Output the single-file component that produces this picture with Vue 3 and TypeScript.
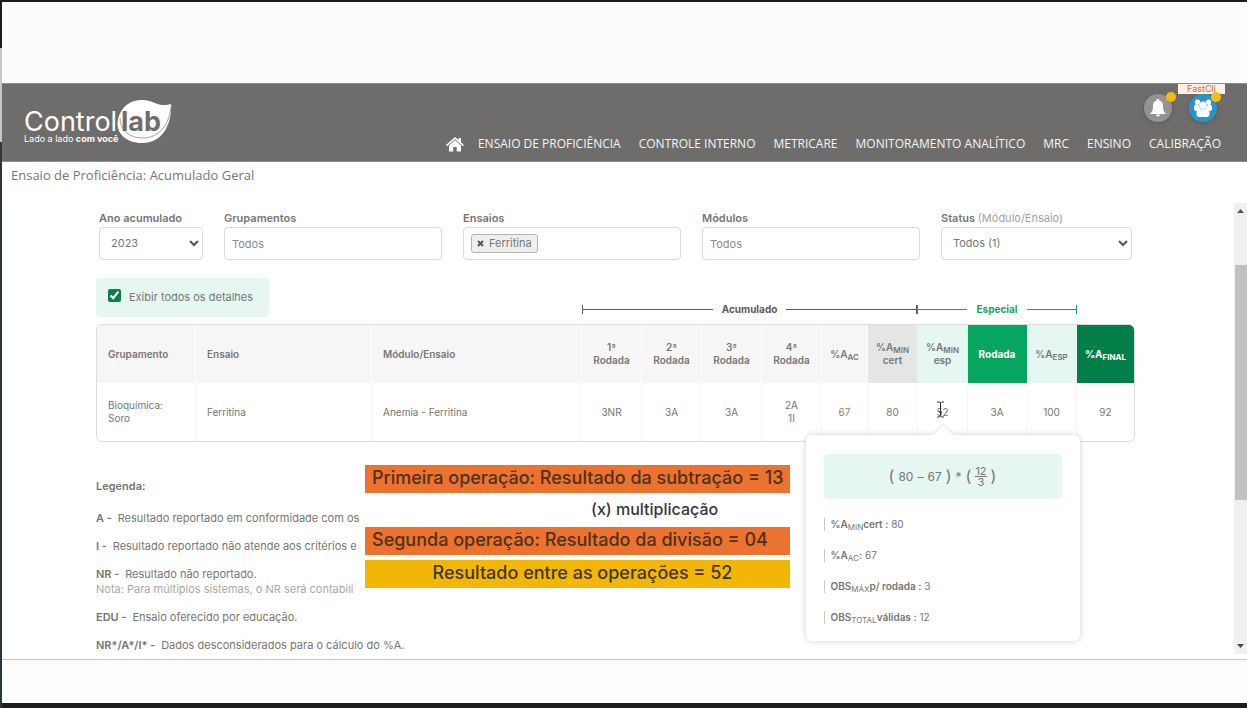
<script setup lang="ts">
import { ref } from 'vue'

const menu = ['ENSAIO DE PROFICIÊNCIA', 'CONTROLE INTERNO', 'METRICARE', 'MONITORAMENTO ANALÍTICO', 'MRC', 'ENSINO', 'CALIBRAÇÃO']
const year = ref('2023')
const status = ref('Todos (1)')
const groups = ref('')
const modules = ref('')
const details = ref(true)
const rounds = ['1ª', '2ª', '3ª', '4ª']
const variables = [
  { base: '%A', sub: 'MIN', rest: 'cert :', value: '80' },
  { base: '%A', sub: 'AC', rest: ':', value: '67' },
  { base: 'OBS', sub: 'MÁX', rest: 'p/ rodada :', value: '3' },
  { base: 'OBS', sub: 'TOTAL', rest: 'válidas :', value: '12' },
]
</script>

<template>
  <div class="frame">
    <header class="header">
      <a class="logo" href="#" aria-label="Controllab">
        <svg width="150" height="48" viewBox="0 0 150 48">
          <text class="logo-name" x="0" y="33">Control</text>
          <path d="M94 21C97 9 106 2 118 2c12 0 16 8 29 4 1 15-5 39-29 39-16 0-27-10-24-24z" fill="#fff" />
          <path d="M147 9c-2 17-11 31-28 31-14 0-23-8-23-20" fill="none" stroke="#a5a4a2" stroke-width="1" />
          <text class="logo-lab" x="97" y="33">lab</text>
          <text class="logo-tag" x="0" y="44">Lado a lado <tspan font-weight="700">com você</tspan></text>
        </svg>
      </a>
      <div class="header-right">
        <div class="actions">
          <button class="round bell" type="button" aria-label="Notificações">
            <svg width="18" height="20" viewBox="0 0 18 20"><path fill="#fff" d="M9 1c1 0 1.500.7 1.500 1.500C13 3.200 14 5.500 14 8c0 4.500 1 6 3 8H1c2-2 3-3.500 3-8 0-2.500 1-4.800 3.500-5.500C7.500 1.700 8 1 9 1zM7 16.500h4c0 1.300-.8 2-2 2s-2-.7-2-2z" /></svg>
            <span class="dot"></span>
          </button>
          <button class="round users" type="button" aria-label="Usuário">
            <svg width="20" height="20" viewBox="0 0 20 20" fill="#fff">
              <circle cx="4.500" cy="4" r="2.600" /><circle cx="15.500" cy="4" r="2.600" />
              <path d="M1 10c0-3 1-4 3.500-4L8 10l-2 3H3c-1.500 0-2-1-2-3zM19 10c0-3-1-4-3.500-4L12 10l2 3h3c1.500 0 2-1 2-3z" />
              <path d="M3.500 16c0-4 1.500-5 6.500-5s6.500 1 6.500 5c0 2-1 3-3 3h-7c-2 0-3-1-3-3z" />
              <circle cx="10" cy="7.500" r="4" stroke="#a9d3ea" stroke-width=".8" />
            </svg>
            <span class="dot"></span>
            <span class="user-tag">FastCli</span>
          </button>
        </div>
        <nav class="nav">
          <a href="#" aria-label="Início" class="home">
            <svg width="18" height="15" viewBox="0 0 18 15" fill="#fff"><path d="M9 0l3.500 3V1H15v4.200L18 8l-1 1.200L9 2.300 1 9.200 0 8z" /><path d="M9 3.300l6 5.200V14.500h-4.300V10H7.300v4.500H3V8.500z" /></svg>
          </a>
          <a v-for="item in menu" :key="item" href="#">{{ item }}</a>
        </nav>
      </div>
    </header>

    <h1 class="crumb">Ensaio de Proficiência: Acumulado Geral</h1>

    <div class="viewport">
      <main class="content">
        <form class="filters" @submit.prevent>
          <div class="field">
            <label for="year">Ano acumulado</label>
            <div class="select">
              <select id="year" v-model="year"><option>2023</option></select>
              <svg width="10" height="7" viewBox="0 0 10 7"><path d="M1 1l4 4 4-4" /></svg>
            </div>
          </div>
          <div class="field">
            <label for="groups">Grupamentos</label>
            <input id="groups" v-model="groups" class="control" type="text" placeholder="Todos" />
          </div>
          <div class="field">
            <label for="tests">Ensaios</label>
            <div class="control tags">
              <span class="chip"><button type="button" aria-label="Remover Ferritina"><svg width="7" height="7" viewBox="0 0 7 7"><path d="M1 1l5 5M6 1L1 6" /></svg></button>Ferritina</span>
              <input id="tests" type="text" />
            </div>
          </div>
          <div class="field">
            <label for="modules">Módulos</label>
            <input id="modules" v-model="modules" class="control" type="text" placeholder="Todos" />
          </div>
          <div class="field">
            <label for="status">Status <span>(Módulo/Ensaio)</span></label>
            <div class="select">
              <select id="status" v-model="status"><option>Todos (1)</option></select>
              <svg width="10" height="7" viewBox="0 0 10 7"><path d="M1 1l4 4 4-4" /></svg>
            </div>
          </div>
        </form>

        <div class="above">
          <div>
            <label class="toggle">
              <input v-model="details" type="checkbox" />
              <span>Exibir todos os detalhes</span>
            </label>
          </div>
          <div class="bracket"><i></i><b>Acumulado</b><i></i></div>
          <div class="bracket special"><i></i><b>Especial</b><i></i></div>
        </div>

        <table class="results">
          <colgroup>
            <col class="w-group" /><col class="w-test" /><col class="w-module" />
            <col v-for="r in rounds" :key="r" class="w-round" />
            <col class="w-ac" /><col class="w-min" /><col class="w-min" /><col class="w-special" /><col class="w-min" /><col class="w-final" />
          </colgroup>
          <thead>
            <tr>
              <th class="left">Grupamento</th>
              <th class="left">Ensaio</th>
              <th class="left">Módulo/Ensaio</th>
              <th v-for="r in rounds" :key="r">{{ r }}<br />Rodada</th>
              <th>%A<sub>AC</sub></th>
              <th class="grey">%A<sub>MIN</sub><br />cert</th>
              <th class="mint">%A<sub>MIN</sub><br />esp</th>
              <th class="green">Rodada</th>
              <th class="mint">%A<sub>ESP</sub></th>
              <th class="dark">%A<sub>FINAL</sub></th>
            </tr>
          </thead>
          <tbody>
            <tr>
              <td class="left">Bioquímica:<br />Soro</td>
              <td class="left">Ferritina</td>
              <td class="left">Anemia - Ferritina</td>
              <td>3NR</td>
              <td>3A</td>
              <td>3A</td>
              <td>2A<br />1I</td>
              <td class="warn">67</td>
              <td>80</td>
              <td class="anchor">
                52
                <svg class="cursor" width="9" height="17" viewBox="0 0 9 17"><path d="M1 1h2.500l1 1 1-1H8M4.500 2v13M1 16h2.500l1-1 1 1H8M3 11h3" /></svg>
                <div class="popup">
                  <div class="formula">
                    <span class="paren">(</span><span>80</span><span>–</span><span>67</span><span class="paren">)</span><span>*</span><span class="paren">(</span>
                    <span class="fraction"><span>12</span><span>3</span></span><span class="paren">)</span>
                  </div>
                  <p v-for="v in variables" :key="v.base + v.sub"><b>{{ v.base }}<sub>{{ v.sub }}</sub>{{ v.rest }}</b> {{ v.value }}</p>
                </div>
              </td>
              <td>3A</td>
              <td>100</td>
              <td>92</td>
            </tr>
          </tbody>
        </table>

        <section class="legend">
          <h2>Legenda:</h2>
          <p><b>A - </b> Resultado reportado em conformidade com os</p>
          <p><b>I - </b> Resultado reportado não atende aos critérios e</p>
          <p><b>NR - </b> Resultado não reportado.<br /><small>Nota: Para múltiplos sistemas, o NR será contabili</small></p>
          <p><b>EDU - </b> Ensaio oferecido por educação.</p>
          <p><b>NR*/A*/I* - </b> Dados desconsiderados para o cálculo do %A.</p>
        </section>

        <aside class="notes">
          <p class="orange">Primeira operação: Resultado da subtração = 13</p>
          <p class="plain">(x) multiplicação</p>
          <p class="orange">Segunda operação: Resultado da divisão = 04</p>
          <p class="yellow">Resultado entre as operações = 52</p>
        </aside>
      </main>

      <div class="scrollbar" aria-hidden="true">
        <svg width="7" height="4" viewBox="0 0 7 4"><path d="M0 4l3.500-4L7 4z" fill="#555" /></svg>
        <div class="track"><div class="thumb"></div></div>
        <svg width="7" height="4" viewBox="0 0 7 4"><path d="M0 0h7L3.500 4z" fill="#444" /></svg>
      </div>
    </div>
    <footer class="base"></footer>
  </div>
</template>

<style>
body {
  margin: 0;
  background: #fff;
}
</style>

<style scoped>
* {
  box-sizing: border-box;
}

.frame {
  position: relative;
  display: flex;
  flex-direction: column;
  min-height: 100vh;
  padding-left: 2px;
  padding-top: 83px;
  overflow: hidden;
  font-family: Inter, "Open Sans", sans-serif;
  font-size: 11px;
  line-height: 15px;
  color: #777674;
  background:
    linear-gradient(#1d1c20, #1d1c20) 0 0 / 100% 2px no-repeat,
    linear-gradient(#1d1c20 48px, #c6c7c6 48px, #c6c7c6 142px, #2d363b 142px) 0 0 / 2px 100% no-repeat,
    linear-gradient(#fbfdfc, #fbfdfc) 0 0 / 100% 83px no-repeat,
    #fff;
}

h1,
h2,
p {
  margin: 0;
  font-size: inherit;
}

a {
  color: inherit;
  text-decoration: none;
}

.header {
  display: flex;
  justify-content: space-between;
  height: 79px;
  padding: 0 26px 0 22px;
  background: #6e6d6b;
  border-top: 1px solid #8f8e8c;
  border-bottom: 1px solid #8f8e8c;
}

.logo {
  margin-top: 14px;
}

.logo-name {
  font-size: 27px;
  fill: #fff;
}

.logo-lab {
  font-size: 27px;
  font-weight: 700;
  fill: #6e6d6b;
}

.logo-tag {
  font-size: 9px;
  fill: #fff;
}

.header-right {
  display: flex;
  flex-direction: column;
  align-items: flex-end;
}

.actions {
  display: flex;
  gap: 17px;
  padding: 10px 4px 0 0;
}

.round {
  position: relative;
  display: grid;
  place-items: center;
  width: 28px;
  height: 28px;
  padding: 0;
  border: 0;
  border-radius: 50%;
  box-shadow: 0 1px 4px #5a5958;
}

.bell {
  background: #949391;
}

.users {
  background: #2b93cb;
}

.dot {
  position: absolute;
  top: -2px;
  right: -4px;
  z-index: 1;
  width: 10px;
  height: 10px;
  border-radius: 50%;
  background: #f6bb16;
}

.user-tag {
  position: absolute;
  top: -10px;
  right: -8px;
  width: 47px;
  font-family: Inter, sans-serif;
  font-size: 9px;
  line-height: 10px;
  color: #cf6a48;
  background: #fdf1e1;
}

.nav {
  display: flex;
  align-items: center;
  gap: 18px;
  margin-top: 14px;
  font-family: "Open Sans", sans-serif;
  font-size: 12px;
  line-height: 16px;
  color: #f4f6f5;
}

.home {
  display: flex;
  margin-right: -4px;
}

.crumb {
  height: 41px;
  padding: 5px 9px;
  font-family: "Open Sans", sans-serif;
  font-size: 13px;
  line-height: 16px;
  font-weight: 400;
}

.viewport {
  display: flex;
  height: 452px;
  overflow: hidden;
}

.content {
  position: relative;
  flex: 1;
  min-width: 0;
  padding: 8px 99px 0 94px;
}

.filters {
  display: grid;
  grid-template-columns:
    minmax(0, 104fr) minmax(0, 218fr) minmax(0, 218fr)
    minmax(0, 218fr) minmax(0, 191fr);
  gap: 21px;
  padding: 0 3px;
}

.field label {
  display: block;
  height: 16px;
  font-weight: 600;
  white-space: nowrap;
}

.field label span {
  font-weight: 400;
  color: #a3a2a1;
}

.control,
.select select {
  display: block;
  width: 100%;
  height: 33px;
  border: 1px solid #d9d9d9;
  border-radius: 4px;
  background: #fff;
  color: #777674;
  font: inherit;
}

.control {
  padding: 0 7px;
}

.control::placeholder {
  color: #8b8a88;
  opacity: 1;
}

.tags {
  display: flex;
  align-items: center;
  gap: 4px;
}

.tags input {
  flex: 1;
  min-width: 0;
  border: 0;
  outline: 0;
}

.chip {
  display: flex;
  align-items: center;
  gap: 5px;
  height: 19px;
  padding: 0 5px;
  border: 1px solid #b5b5b5;
  border-radius: 3px;
  background: #efefef;
}

.chip button {
  display: flex;
  padding: 0;
  border: 0;
  background: none;
}

.chip path,
.select path {
  fill: none;
  stroke: #555;
  stroke-width: 2;
}

.select {
  display: grid;
  align-items: center;
}

.select select,
.select svg {
  grid-area: 1 / 1;
}

.select select {
  padding: 0 11px;
  appearance: none;
}

.select svg {
  justify-self: end;
  margin-right: 4px;
  pointer-events: none;
}

.above {
  display: grid;
  grid-template-columns: 486fr 335fr 160fr 58fr;
  align-items: end;
  margin: 18px 0 7px;
}

.toggle {
  display: inline-flex;
  align-items: center;
  gap: 8px;
  height: 39px;
  padding: 0 16px 0 12px;
  border-radius: 4px;
  background: #e5f7f0;
  vertical-align: top;
}

.toggle input {
  width: 13px;
  height: 13px;
  margin: 0 0 4px;
  accent-color: #0b7f4b;
}

.bracket {
  display: flex;
  align-items: center;
  gap: 9px;
  color: #5c5b5a;
  font-size: 10px;
  line-height: 16px;
}

.bracket i {
  display: flex;
  align-items: center;
  flex: 1;
  height: 9px;
  border-left: 1px solid;
}

.bracket i::after {
  content: "";
  flex: 1;
  height: 1px;
  background: currentColor;
}

.bracket i:last-child {
  border-left: 0;
  border-right: 1px solid;
}

.special {
  color: #17a463;
}

.results {
  width: 100%;
  table-layout: fixed;
  border: 1px solid #dcdcdc;
  border-radius: 6px;
  border-spacing: 0;
  font-size: 10px;
  line-height: 13px;
  text-align: center;
}

.w-group { width: 99px; }
.w-test { width: 176px; }
.w-module { width: 210px; }
.w-round { width: 60px; }
.w-ac { width: 46px; }
.w-min { width: 50px; }
.w-special { width: 59px; }
.w-final { width: 57px; }

th,
td {
  height: 58px;
  padding: 0;
  border-right: 1px solid #f5f5f5;
}

th {
  font-weight: 600;
  background: #f6f6f6;
  border-color: #fff;
}

th:first-child {
  border-top-left-radius: 5px;
}

th:last-child,
td:last-child {
  border-right: 0;
}

.left {
  padding-left: 11px;
  text-align: left;
}

sub {
  font-size: 8px;
  line-height: 0;
  vertical-align: -2px;
}

.grey { background: #e5e5e5; border-color: #e5f7f0; }
.mint { background: #e5f7f0; border-color: #e5f7f0; }
.green { background: #05a660; border-color: #05a660; color: #fff; font-weight: 700; }
.dark { background: #027e48; border-top-right-radius: 5px; color: #fff; font-weight: 700; }
.warn { color: #a37a4c; }

.anchor {
  position: relative;
}

.cursor {
  position: absolute;
  top: 18px;
  left: 18px;
  fill: none;
  stroke: #333;
}

.popup {
  position: absolute;
  top: 52px;
  left: 50%;
  z-index: 3;
  width: 274px;
  margin-left: -137px;
  padding: 19px 18px 17px;
  border-radius: 6px;
  background: #fff;
  box-shadow: 0 0 6px #d0d0d0;
  text-align: left;
}

.popup::before {
  content: "";
  position: absolute;
  top: -10px;
  left: 127px;
  border: 10px solid transparent;
  border-top: 0;
  border-bottom-color: #fff;
  filter: drop-shadow(0 -1px 1px #e2e2e2);
}

.formula {
  display: flex;
  align-items: center;
  justify-content: center;
  gap: 4px;
  height: 45px;
  margin-bottom: 19px;
  border-radius: 4px;
  background: #e5f7f0;
  font-size: 12px;
}

.paren {
  font-size: 16px;
}

.fraction {
  display: flex;
  flex-direction: column;
  font-size: 11px;
  line-height: 10px;
  text-align: center;
}

.fraction span + span {
  border-top: 1px solid;
}

.popup p {
  padding-left: 6px;
  border-left: 1px solid #c9c9c9;
  line-height: 13px;
}

.popup p + p {
  margin-top: 18px;
}

.popup b {
  font-weight: 600;
}

.popup sub {
  font-weight: 400;
}

.legend {
  display: flex;
  flex-direction: column;
  gap: 13px;
  margin-top: 37px;
  white-space: nowrap;
}

.legend h2 {
  margin-bottom: 4px;
  font-weight: 600;
}

.legend b {
  margin-right: 3px;
  font-weight: 600;
}

.legend small {
  font-size: 11px;
  color: #a9a8a7;
}

.notes {
  position: absolute;
  top: 262px;
  left: 362px;
  z-index: 2;
  width: 440px;
  padding: 0 14px 12px 1px;
  background: #fff;
  font-size: 18px;
  line-height: 26px;
  font-weight: 500;
  white-space: nowrap;
}

.notes p {
  height: 28px;
  padding-left: 7px;
}

.notes .orange {
  background: #ec722f;
  color: #4f3116;
}

.notes .plain {
  height: 34px;
  padding: 3px 0 0 226px;
  font-size: 16px;
  color: #33373a;
}

.notes .yellow {
  margin-top: 5px;
  padding: 0 0 0 10px;
  background: #f2b606;
  color: #443709;
  text-align: center;
}

.scrollbar {
  display: flex;
  flex-direction: column;
  align-items: center;
  justify-content: space-between;
  width: 13px;
  height: 451px;
  padding: 6px 0;
  background: #f0f0f0;
}

.track {
  flex: 1;
  align-self: stretch;
  padding: 52px 0 0 1px;
}

.thumb {
  height: 62%;
  background: #c1c1c1;
}

.base {
  flex: 1;
  margin-top: 4px;
  border-top: 1px solid #b9cfc8;
  border-bottom: 5px solid #1d1c20;
  background: #fbfefd;
}
</style>
